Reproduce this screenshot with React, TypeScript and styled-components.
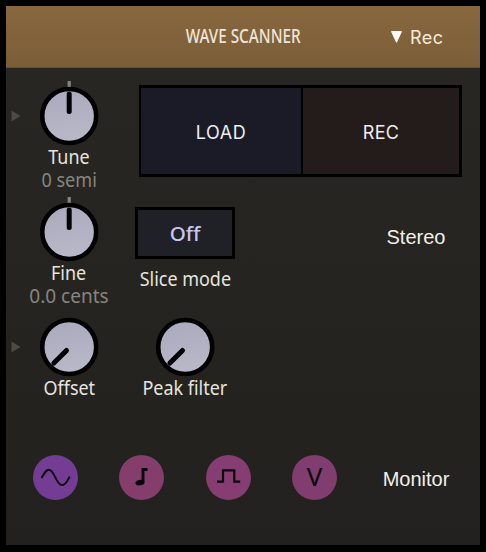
import React from "react";
import styled, { createGlobalStyle } from "styled-components";

const GlobalStyle = createGlobalStyle`
  * { box-sizing: border-box; }
  body { margin: 0; background: #000; }
`;

const Frame = styled.div`
  width: 486px;
  height: 552px;
  padding: 6px 6px 7px;
  background: #000;
  overflow: hidden;
`;

const Panel = styled.main`
  width: 474px;
  height: 539px;
  background: linear-gradient(#282723, #252420 50%, #22211f);
`;

const Header = styled.header`
  display: grid;
  grid-template-columns: 142px 190px 1fr;
  height: 62px;
  align-items: center;
  background: linear-gradient(#88673e, #7b5e38);
  border-bottom: 1px solid #675033;
`;

type TextProps = {
  $size: number;
  $line: number;
  $stretch?: number;
  $color?: string;
  $family?: string;
  $spacing?: number;
  $shift?: number;
  $weight?: number;
};

const Text = styled.span<TextProps>`
  display: block;
  white-space: nowrap;
  font-family: ${(p) => p.$family ?? '"Noto Sans"'}, sans-serif;
  font-size: ${(p) => p.$size}px;
  font-weight: ${(p) => p.$weight ?? 400};
  line-height: ${(p) => p.$line}px;
  color: ${(p) => p.$color ?? "#e6e4df"};
  letter-spacing: ${(p) => p.$spacing ?? 0}px;
  margin-top: ${(p) => p.$shift ?? 0}px;
  transform: scaleX(${(p) => p.$stretch ?? 1});
`;

const Title = styled.div`
  display: flex;
  justify-content: center;
  padding-bottom: 4px;
`;

const RecMenu = styled.div`
  display: flex;
  align-items: center;
  gap: 7px;
  padding-left: 52px;
`;

const Row = styled.section<{ $height: number }>`
  display: grid;
  grid-template-columns: 126px 106px 114px 128px;
  height: ${(p) => p.$height}px;
`;

const KnobCell = styled.div`
  display: grid;
  grid-template-columns: 33px 60px 33px;
  grid-template-rows: 78px 23px 15px;
  &:nth-child(2) { grid-template-columns: 23px 60px 23px; }
`;

const Modulation = styled.svg`
  display: block;
  width: 10px;
  height: 12px;
  margin: 42px 0 0 5px;
`;

const Dial = styled.svg`
  grid-column: 2;
  display: block;
  width: 60px;
  height: 78px;
`;

const Caption = styled.div`
  grid-column: 1 / -1;
  display: flex;
  justify-content: center;
`;

const ButtonPair = styled.div`
  grid-column: 2 / -1;
  display: grid;
  grid-template-columns: 160px 156px;
  gap: 2px;
  width: 323px;
  height: 92px;
  margin: 17px 0 0 7px;
  padding: 3px 3px 3px 2px;
  background: #000;
`;

const PadButton = styled.button<{ $fill: string }>`
  display: flex;
  align-items: center;
  justify-content: center;
  padding: 0;
  border: 0;
  background: ${(p) => p.$fill};
`;

const SliceCell = styled.div`
  display: flex;
  flex-direction: column;
  align-items: center;
  padding-top: 23px;
`;

const ModeButton = styled.button`
  display: flex;
  align-items: center;
  justify-content: center;
  width: 100px;
  height: 52px;
  padding: 0;
  border: 3px solid #000;
  background: #202127;
`;

const SideLabel = styled.div`
  grid-column: -2 / -1;
  display: flex;
  align-items: flex-start;
  justify-content: center;
`;

const Footer = styled.section`
  display: grid;
  grid-template-columns: 346px 128px;
  height: 130px;
`;

const Sources = styled.div`
  display: grid;
  grid-template-columns: repeat(4, 86.5px);
  align-content: start;
  padding: 40px 0 0 26.5px;
`;

const SourceButton = styled.button<{ $fill: string }>`
  width: 45px;
  height: 45px;
  padding: 0;
  border: 0;
  border-radius: 50%;
  background: ${(p) => p.$fill};
  svg { display: block; fill: none; stroke: #080409; }
`;

type KnobProps = {
  label: string;
  angle: number;
  value?: string;
  valueStretch?: number;
  tick?: boolean;
  modulated?: boolean;
};

function Knob({ label, angle, value, valueStretch, tick, modulated }: KnobProps) {
  const gradientId = label.replace(" ", "");
  return (
    <KnobCell>
      {modulated && (
        <Modulation viewBox="0 0 10 12">
          <path d="M0.5 0.5 9.5 6 0.5 11.5Z" fill="#4c4b48" />
        </Modulation>
      )}
      <Dial viewBox="0 0 60 78">
        <defs>
          <linearGradient id={gradientId} x1="0" y1="0" x2="0.2" y2="1">
            <stop offset="0" stopColor="#aaa8bc" />
            <stop offset="1" stopColor="#b9b8c8" />
          </linearGradient>
        </defs>
        {tick && <path d="M30.2 13V19" stroke="#85847f" strokeWidth="3.2" />}
        <circle cx="30.2" cy="48" r="27" fill={`url(#${gradientId})`} stroke="#000" strokeWidth="4.6" />
        <path
          d={angle === 0 ? "M30.2 26V43.5" : "M27.5 51.5 14.9 64.1"}
          stroke="#030305"
          strokeWidth="5"
          strokeLinecap="round"
        />
      </Dial>
      <Caption>
        <Text $size={19} $line={22} $stretch={0.945}>{label}</Text>
      </Caption>
      {value && (
        <Caption>
          <Text $size={19} $line={22} $color="#87857f" $stretch={valueStretch}>{value}</Text>
        </Caption>
      )}
    </KnobCell>
  );
}

export default function App() {
  return (
    <>
      <GlobalStyle />
      <Frame>
        <Panel>
          <Header>
            <span />
            <Title>
              <Text $size={20.5} $line={24} $stretch={0.745} $weight={500} $color="#efe5d7">WAVE SCANNER</Text>
            </Title>
            <RecMenu>
              <svg width="13" height="14" viewBox="0 0 13 14">
                <path d="M1.5 1.5H11.5L6.5 12.3Z" fill="#fffdf8" stroke="#fffdf8" strokeLinejoin="round" />
              </svg>
              <Text $size={18} $line={24} $family="Inter" $color="#f5eadc" $spacing={0.5} $shift={2}>Rec</Text>
            </RecMenu>
          </Header>

          <Row $height={116}>
            <Knob label="Tune" angle={0} value="0 semi" valueStretch={0.95} tick modulated />
            <ButtonPair>
              <PadButton $fill="#1b1b27">
                <Text $size={18} $line={24} $family="Inter" $color="#eeedf4" $spacing={0.6} $shift={3}>LOAD</Text>
              </PadButton>
              <PadButton $fill="#241c1b">
                <Text $size={18} $line={24} $family="Inter" $color="#f1eded" $spacing={0.3} $shift={3}>REC</Text>
              </PadButton>
            </ButtonPair>
          </Row>

          <Row $height={115}>
            <Knob label="Fine" angle={0} value="0.0 cents" tick />
            <SliceCell>
              <ModeButton>
                <Text $size={20.5} $line={26} $weight={500} $color="#c9c5f0" $shift={-1}>Off</Text>
              </ModeButton>
              <Text $size={19} $line={24} $stretch={0.945} $shift={8}>Slice mode</Text>
            </SliceCell>
            <SideLabel>
              <Text $size={20} $line={24} $family='"Liberation Sans"' $shift={41} $color="#f1efeb">Stereo</Text>
            </SideLabel>
          </Row>

          <Row $height={116}>
            <Knob label="Offset" angle={-135} modulated />
            <Knob label="Peak filter" angle={-135} />
          </Row>

          <Footer>
            <Sources>
              <SourceButton $fill="#743c93" aria-label="Sine wave">
                <svg width="45" height="45" viewBox="0 0 45 45">
                  <path d="M9 22.3C12 16.8 13.3 14.7 16 14.7C21.5 14.7 23 30 29 30C32 30 34 27 36.3 22.3" strokeWidth="1.9" strokeLinecap="round" />
                </svg>
              </SourceButton>
              <SourceButton $fill="#853d6b" aria-label="Note">
                <svg width="45" height="45" viewBox="0 0 45 45">
                  <path d="M28.5 14.5H24V26.5" strokeWidth="2.9" />
                  <ellipse cx="21" cy="27.6" rx="4.6" ry="2.7" transform="rotate(-8 21 27.6)" fill="#080409" stroke="none" />
                </svg>
              </SourceButton>
              <SourceButton $fill="#853d72" aria-label="Pulse wave">
                <svg width="45" height="45" viewBox="0 0 45 45">
                  <path d="M11 26.6H17V15.3H28.3V26.6H34.2" strokeWidth="2.2" />
                </svg>
              </SourceButton>
              <SourceButton $fill="#813d70" aria-label="Voltage">
                <Text $size={26} $line={42} $color="#080409" $shift={-3}>V</Text>
              </SourceButton>
            </Sources>
            <SideLabel>
              <Text $size={20} $line={24} $family='"Liberation Sans"' $shift={52} $color="#f1efeb">Monitor</Text>
            </SideLabel>
          </Footer>
        </Panel>
      </Frame>
    </>
  );
}
